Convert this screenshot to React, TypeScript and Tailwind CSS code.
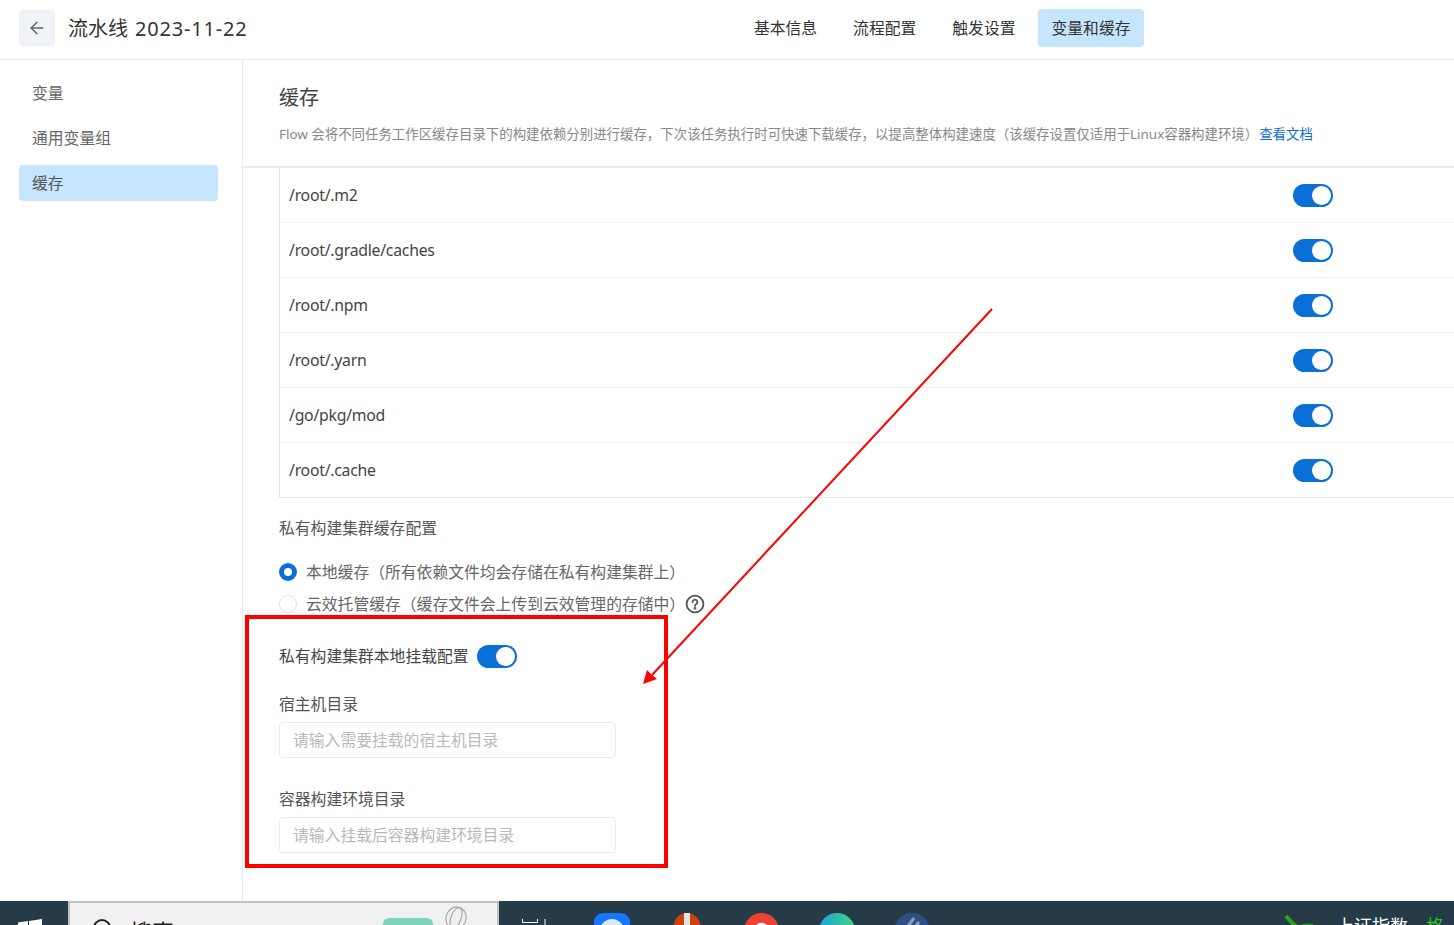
import { ArrowLeft } from 'lucide-react'

const TABS = ['基本信息', '流程配置', '触发设置', '变量和缓存']
const SIDE_ITEMS = ['变量', '通用变量组', '缓存']
const CACHE_PATHS = ['/root/.m2', '/root/.gradle/caches', '/root/.npm', '/root/.yarn', '/go/pkg/mod', '/root/.cache']

const Toggle = () => (
  <div className="flex h-[23px] w-10 items-center justify-end rounded-full bg-[#0b6fd8] pr-[2px]">
    <div className="h-[19px] w-[19px] rounded-full bg-white" />
  </div>
)

const Field = ({ label, placeholder }: { label: string; placeholder: string }) => (
  <div>
    <p className="h-6 text-[15.8px] leading-6 text-[#555]">{label}</p>
    <input
      readOnly
      placeholder={placeholder}
      className="mt-[6px] block h-9 w-[337px] rounded border border-[#e8ecf1] px-[13px] text-[15.8px] outline-none placeholder:text-[#b9b9b9]"
    />
  </div>
)

const Header = () => (
  <header className="flex h-[60px] shrink-0 items-center border-b border-[#e8ecf1] pb-[3px] pl-[19px] pr-[310px]">
    <button className="flex h-9 w-9 items-center justify-center rounded bg-[#eff3f7] text-[#666]">
      <ArrowLeft className="h-5 w-5" strokeWidth={1.8} />
    </button>
    <h1 className="ml-[13px] mt-[2px] text-xl text-[#333]">
      流水线<span className="ml-[1px] tracking-[0.8px]"> 2023-11-22</span>
    </h1>
    <nav className="ml-auto flex items-center gap-[9px]">
      {TABS.map((tab, i) => (
        <div
          key={tab}
          className={
            i === 3
              ? 'flex h-[38px] items-center rounded bg-[#c5e6fe] px-[13.5px] pt-[2px] text-[15.8px] text-[#333]'
              : 'flex h-[38px] items-center rounded px-[13.5px] pt-[2px] text-[15.8px] text-[#333]'
          }
        >
          {tab}
        </div>
      ))}
    </nav>
  </header>
)

const Sidebar = () => (
  <aside className="flex w-[243px] shrink-0 flex-col gap-[9px] border-r border-[#e8ecf1] pl-[19px] pr-6 pt-[15px]">
    {SIDE_ITEMS.map((item, i) => (
      <div
        key={item}
        className={
          i === 2
            ? 'flex h-9 items-center rounded bg-[#c5e6fe] px-[13px] pt-[2px] text-[15.8px] text-[#555]'
            : 'flex h-9 items-center rounded px-[13px] pt-[2px] text-[15.8px] text-[#666]'
        }
      >
        {item}
      </div>
    ))}
  </aside>
)

const Radio = ({ checked, label }: { checked?: boolean; label: string }) => (
  <div className="flex h-6 items-center text-[15.8px] text-[#666]">
    {checked ? (
      <span className="h-[18px] w-[18px] rounded-full border-[5px] border-[#0b6fd8] bg-white" />
    ) : (
      <span className="h-[18px] w-[18px] rounded-full border border-[#dde1e6] bg-white" />
    )}
    <span className="ml-[9px] pt-[2px]">{label}</span>
  </div>
)

const Main = () => (
  <main className="min-w-0 flex-1">
    <div className="h-[108px] border-b-2 border-[#e8ecf1] pl-9 pt-[23px]">
      <h2 className="h-[30px] text-xl leading-[30px] text-[#444]">缓存</h2>
      <p className="mt-[11px] whitespace-nowrap text-[13.43px] leading-5 text-[#888]">
        Flow 会将不同任务工作区缓存目录下的构建依赖分别进行缓存，下次该任务执行时可快速下载缓存，以提高整体构建速度（该缓存设置仅适用于Linux容器构建环境）
        <span className="ml-[1px] text-[#0b6fd8]">查看文档</span>
      </p>
    </div>
    <div className="ml-9 border-b border-l border-[#e3e6ea]">
      {CACHE_PATHS.map((path, i) => (
        <div
          key={path}
          className={
            i === CACHE_PATHS.length - 1
              ? 'flex h-[54px] items-center pl-[9px] pr-[121px] text-[15.8px] tracking-[-0.25px] text-[#444]'
              : 'flex h-[55px] items-center border-b border-[#eff1f4] pl-[9px] pr-[121px] text-[15.8px] tracking-[-0.25px] text-[#444]'
          }
        >
          <span className="flex-1 pt-[2px]">{path}</span>
          <Toggle />
        </div>
      ))}
    </div>
    <div className="pl-9 pt-[18px]">
      <p className="h-6 text-[15.8px] leading-6 text-[#555]">私有构建集群缓存配置</p>
      <div className="mt-[20px] flex flex-col gap-2">
        <Radio checked label="本地缓存（所有依赖文件均会存储在私有构建集群上）" />
        <div className="flex items-center">
          <Radio label="云效托管缓存（缓存文件会上传到云效管理的存储中）" />
          <svg className="h-5 w-5" viewBox="0 0 20 20" fill="none" stroke="#555" strokeWidth="1.8">
            <circle cx="10" cy="10" r="8.4" />
            <path d="M7.6 8a2.4 2.4 0 1 1 3.6 2.1c-.8.5-1.2.9-1.2 1.8" strokeLinecap="round" />
            <circle cx="10" cy="14.4" r="0.5" fill="#555" />
          </svg>
        </div>
      </div>
      <div className="mt-[29px] flex h-[23px] items-center gap-[8px] text-[15.8px] text-[#444]">
        <span>私有构建集群本地挂载配置</span>
        <Toggle />
      </div>
      <div className="mt-6 flex flex-col gap-[29px]">
        <Field label="宿主机目录" placeholder="请输入需要挂载的宿主机目录" />
        <Field label="容器构建环境目录" placeholder="请输入挂载后容器构建环境目录" />
      </div>
    </div>
  </main>
)

// only the top of the taskbar is in frame, everything below is cut off
const Taskbar = () => (
  <footer className="flex h-6 shrink-0 items-start overflow-hidden bg-[#253b47]">
    <svg className="ml-[18px] mt-[18px] h-6 w-6 shrink-0" viewBox="0 0 24 24" fill="#fff">
      <path d="M0 3.4 10 2v9.5H0zM11 1.9 24 0v11.5H11z" />
    </svg>
    <div className="ml-[26px] flex h-10 w-[431px] shrink-0 items-start border-2 border-[#c3c3c3] bg-[#f0f0f0]">
      <span className="ml-[23px] mt-[16px] h-[18px] w-[18px] shrink-0 rounded-full border-2 border-[#222]" />
      <span className="ml-[19px] mt-[14px] shrink-0 whitespace-nowrap text-[22px] leading-7 text-[#222]">搜索</span>
      <div className="ml-[209px] mt-[15px] h-8 w-[50px] shrink-0 rounded-t-[6px] bg-[#7fd3bb]" />
      <svg className="ml-[11px] mt-[3px] h-10 w-6 shrink-0" viewBox="0 0 24 40" fill="none" stroke="#9a9aa8" strokeWidth="1">
        <ellipse cx="12" cy="12" rx="10" ry="11" transform="rotate(20 12 12)" />
        <ellipse cx="12" cy="12" rx="5" ry="11" transform="rotate(20 12 12)" />
      </svg>
    </div>
    <svg className="ml-[23px] mt-[18px] h-6 w-6 shrink-0" viewBox="0 0 24 24" fill="none" stroke="#fff" strokeWidth="1">
      <path d="M.5 0v3.5h15V0M23 0v12" />
    </svg>
    <div className="ml-[48px] mt-[12px] h-10 w-9 shrink-0 rounded-t-[9px] bg-[#1677ff] pl-[6px] pt-[6px]">
      <div className="h-6 w-6 rounded-full bg-[#dfe8fb]" />
    </div>
    <svg className="ml-[44px] mt-[12px] h-10 w-[26px] shrink-0" viewBox="0 0 26 40">
      <path d="M0 10C2 3 8 0 13 0s11 3 13 10v20H0z" fill="#cf3f10" />
      <rect x="10" y="0" width="6" height="24" fill="#e3e3e3" />
    </svg>
    <svg className="ml-[44px] mt-[12px] h-[35px] w-[35px] shrink-0" viewBox="0 0 36 36">
      <circle cx="18" cy="18" r="18" fill="#ea4335" />
      <path d="M18 18 35 12a18 18 0 0 1-8 22z" fill="#fbbc05" />
      <circle cx="18" cy="18" r="8" fill="#fff" />
      <circle cx="18" cy="18" r="6" fill="#4285f4" />
    </svg>
    <svg className="ml-10 mt-[12px] h-[36px] w-[36px] shrink-0" viewBox="0 0 36 36">
      <defs>
        <linearGradient id="edge" x1="0" x2="1" y1="0" y2="0">
          <stop offset="0" stopColor="#1aa5dc" />
          <stop offset="1" stopColor="#45d47c" />
        </linearGradient>
      </defs>
      <circle cx="18" cy="18" r="18" fill="url(#edge)" />
      <path d="M6 18a12 7 0 0 1 20 0z" fill="#0f6fa8" />
    </svg>
    <svg className="ml-[39px] mt-[12px] h-[36px] w-[36px] shrink-0" viewBox="0 0 36 36">
      <circle cx="18" cy="18" r="18" fill="#2c4f86" />
      <path d="M12 16 20 5M17 19l8-10" stroke="#8d9fb8" strokeWidth="3" />
    </svg>
    <svg className="ml-[355px] mt-[14px] h-6 w-[30px] shrink-0" viewBox="0 0 30 24" fill="none" stroke="#2aa515" strokeWidth="4">
      <path d="M1 1c4 5 8 9 13 13M14 14c3-3 6-4 14-3" />
    </svg>
    <span className="ml-[21px] mt-[13px] whitespace-nowrap text-lg leading-6 text-white">上证指数</span>
    <span className="ml-[18px] mt-[13px] whitespace-nowrap text-lg leading-6 text-[#2fc71f]">格</span>
  </footer>
)

export default function App() {
  return (
    <div className="relative flex h-[925px] w-[1454px] flex-col overflow-hidden bg-white font-['Noto_Sans','Noto_Sans_CJK_SC',sans-serif]">
      <Header />
      <div className="flex min-h-0 flex-1">
        <Sidebar />
        <Main />
      </div>
      <Taskbar />
      {/* red annotation drawn over the screenshot */}
      <div className="absolute left-[245px] top-[615px] h-[253px] w-[423px] border-4 border-[#ff0000]" />
      <svg className="absolute left-[630px] top-[300px] h-[400px] w-[370px]" viewBox="0 0 370 400" fill="none">
        <path d="M362 9 22 375" stroke="#ff0000" strokeWidth="2" />
        <path d="M13 384 17 370 22 375 27 379z" fill="#ff0000" />
      </svg>
    </div>
  )
}
